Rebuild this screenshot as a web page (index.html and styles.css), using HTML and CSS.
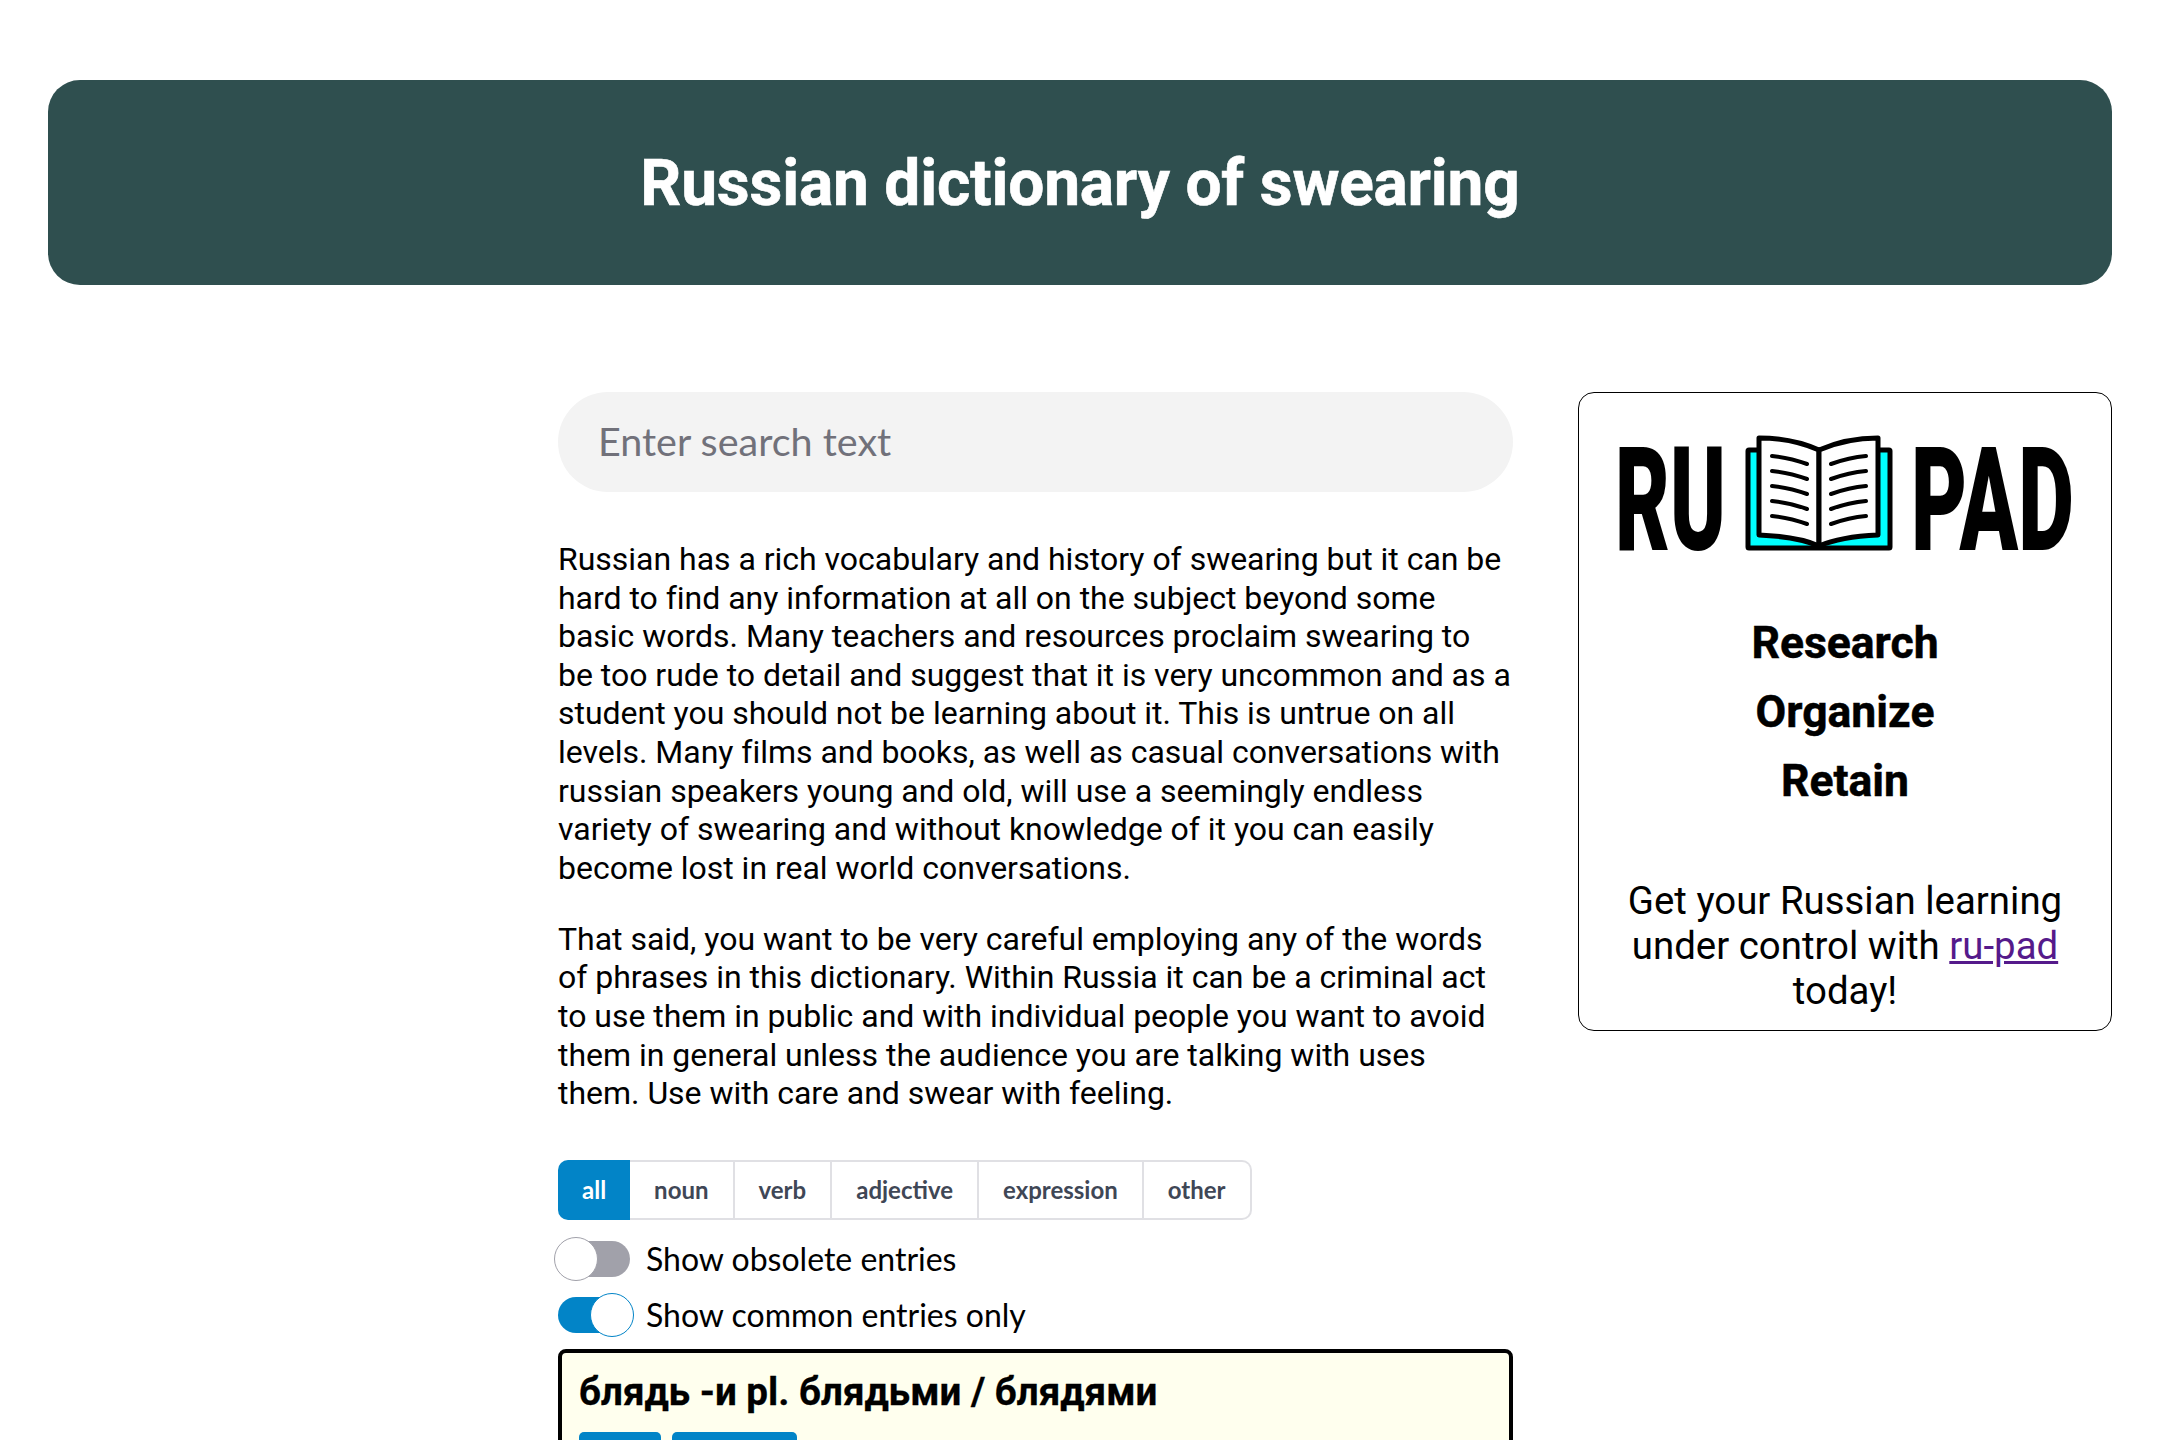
FILE: index.html
```html
<!DOCTYPE html>
<html lang="en">
<head>
    <meta charset="UTF-8">
    <meta name="viewport" content="width=device-width, initial-scale=1.0">
    <title>Russian dictionary of swearing</title>
    <link rel="stylesheet" href="styles.css">
</head>
<body>
    <header class="banner">
        <h1>Russian dictionary of swearing</h1>
    </header>

    <div class="content">
        <main class="main">
            <input class="search" type="text" placeholder="Enter search text">

            <p class="intro">Russian has a rich vocabulary and history of swearing but it can be hard to find any information at all on the subject beyond some basic words. Many teachers and resources proclaim swearing to be too rude to detail and suggest that it is very uncommon and as a student you should not be learning about it. This is untrue on all levels. Many films and books, as well as casual conversations with russian speakers young and old, will use a seemingly endless variety of swearing and without knowledge of it you can easily become lost in real world conversations.</p>
            <p class="intro">That said, you want to be very careful employing any of the words of phrases in this dictionary. Within Russia it can be a criminal act to use them in public and with individual people you want to avoid them in general unless the audience you are talking with uses them. Use with care and swear with feeling.</p>

            <div class="filters">
                <button class="filter active">all</button>
                <button class="filter">noun</button>
                <button class="filter">verb</button>
                <button class="filter">adjective</button>
                <button class="filter">expression</button>
                <button class="filter">other</button>
            </div>

            <label class="toggle-row">
                <span class="toggle"><span class="knob"></span></span>
                Show obsolete entries
            </label>
            <label class="toggle-row">
                <span class="toggle on"><span class="knob"></span></span>
                Show common entries only
            </label>

            <article class="entry">
                <h2>блядь -и pl. блядьми / блядями</h2>
                <div class="tags">
                    <span class="tag">noun</span>
                    <span class="tag">common</span>
                </div>
            </article>
        </main>

        <aside class="promo">
            <svg class="logo" viewBox="0 0 454 116" role="img" aria-label="RU PAD">
                <text class="logo-text" x="-3" y="115" textLength="111" lengthAdjust="spacingAndGlyphs">RU</text>
                <text class="logo-text" x="293" y="115" textLength="163" lengthAdjust="spacingAndGlyphs">PAD</text>
                <rect class="book-cover" x="130" y="15" width="142" height="98" rx="1"/>
                <path class="book-page" d="M141 3 C165 3 185 8 201 15 V111 C185 104 165 101 141 100 Z"/>
                <path class="book-page" d="M260 3 C237 3 217 8 201 15 V111 C217 104 237 101 260 100 Z"/>
                <path class="book-line" d="M154 21 C166 22 178 25 189 29 M154 36 C166 37 178 40 189 44 M154 51 C166 52 178 55 189 59 M154 66 C166 67 178 70 189 74 M154 81 C166 82 178 85 189 89"/>
                <path class="book-line" d="M248 21 C236 22 224 25 213 29 M248 36 C236 37 224 40 213 44 M248 51 C236 52 224 55 213 59 M248 66 C236 67 224 70 213 74 M248 81 C236 82 224 85 213 89"/>
            </svg>
            <ul class="promo-list">
                <li>Research</li>
                <li>Organize</li>
                <li>Retain</li>
            </ul>
            <p class="promo-text">Get your Russian learning under control with <a href="#">ru-pad</a> today!</p>
        </aside>
    </div>
</body>
</html>
```

FILE: styles.css
```css
html {
    height: 100%;
    overflow: hidden;
}
body {
    margin: 0;
    padding: 80px 48px 0;
    background-color: white;
    font-family: Roboto, sans-serif;
    color: black;
}
.banner {
    background-color: #2f4f4f;
    border-radius: 32px;
    height: 205px;
    padding-top: 2px;
    box-sizing: border-box;
    display: flex;
    justify-content: center;
    align-items: center;
}
.banner h1 {
    margin: 0;
    font-size: 64px;
    font-weight: 700;
    letter-spacing: -0.2px;
    -webkit-text-stroke: 0.6px white;
    color: white;
}
.content {
    display: grid;
    grid-template-columns: 955px 534px;
    column-gap: 65px;
    margin: 107px 0 0 510px;
    align-items: start;
}
.search {
    display: block;
    box-sizing: border-box;
    width: 100%;
    height: 100px;
    padding: 0 40px 4px;
    border: none;
    border-radius: 50px;
    background-color: #f3f3f3;
    font-family: Lato, sans-serif;
    font-size: 39.5px;
}
.search::placeholder {
    color: #71717a;
}
.intro {
    margin: 32.5px 0;
    font-size: 32px;
    line-height: 38.6px;
    letter-spacing: -0.02px;
}
.search + .intro {
    margin-top: 48px;
}
.filters {
    display: inline-flex;
    margin: 15px 0 10.5px;
    vertical-align: top;
}
.filter {
    box-sizing: border-box;
    height: 60px;
    padding: 0 24px 2px;
    border: solid #e0e0e4;
    border-width: 2px 2px 2px 0;
    background-color: white;
    font-family: Lato, sans-serif;
    font-size: 24px;
    font-weight: 700;
    color: #3f4756;
}
.filter.active {
    border: none;
    border-radius: 10px 0 0 10px;
    background-color: #0284c7;
    color: white;
}
.filter:last-child {
    border-radius: 0 10px 10px 0;
}
.toggle-row {
    display: flex;
    align-items: center;
    gap: 16px;
    height: 56px;
    font-family: Lato, sans-serif;
    font-size: 32px;
}
.toggle {
    position: relative;
    width: 72px;
    height: 36px;
    border-radius: 18px;
    background-color: #a1a1aa;
}
.toggle.on {
    background-color: #0284c7;
}
.knob {
    position: absolute;
    top: -4px;
    left: -4px;
    box-sizing: border-box;
    width: 44px;
    height: 44px;
    border: 1px solid #a1a1aa;
    border-radius: 50%;
    background-color: white;
}
.toggle.on .knob {
    left: 32px;
    border-color: #0284c7;
}
.entry {
    box-sizing: border-box;
    height: 400px;
    margin-top: 6px;
    padding: 16px 17px;
    border: 4px solid black;
    border-radius: 8px;
    background-color: #ffffee;
}
.entry h2 {
    margin: 0;
    font-size: 38.6px;
    font-weight: 700;
    -webkit-text-stroke: 0.3px black;
}
.tags {
    display: flex;
    gap: 11px;
    margin-top: 18px;
}
.tag {
    padding: 12px 14.5px 4px;
    border-radius: 5px;
    background-color: #0284c7;
    color: white;
    font-size: 24px;
}
.promo {
    box-sizing: border-box;
    height: 639px;
    padding: 42px 20px 0;
    border: 1px solid black;
    border-radius: 16px;
    text-align: center;
}
.logo {
    display: block;
    width: 454px;
    height: 116px;
    margin: 0 auto;
    overflow: visible;
}
.logo-text {
    font-family: Roboto, sans-serif;
    font-size: 145px;
    font-weight: 900;
    fill: black;
}
.book-cover {
    fill: #00ffff;
    stroke: black;
    stroke-width: 5;
    stroke-linejoin: round;
}
.book-page {
    fill: white;
    stroke: black;
    stroke-width: 5;
    stroke-linejoin: round;
}
.book-line {
    fill: none;
    stroke: black;
    stroke-width: 4;
    stroke-linecap: round;
}
.promo-list {
    margin: 58px 0 0;
    padding: 0;
    list-style: none;
    font-size: 44.5px;
    font-weight: 700;
    line-height: 69px;
    -webkit-text-stroke: 0.5px black;
}
.promo-text {
    margin: 62px 0 0;
    font-size: 38.4px;
    line-height: 45px;
}
.promo-text a {
    color: #551a8b;
}
```
